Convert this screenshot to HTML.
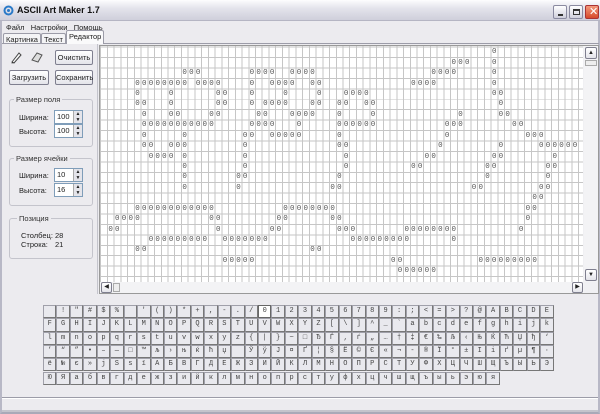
<!DOCTYPE html>
<html><head><meta charset="utf-8"><style>
*{margin:0;padding:0;box-sizing:border-box}
body{width:600px;height:414px;overflow:hidden;background:#ecebef;font-family:"Liberation Sans",sans-serif;font-size:7.5px;color:#222;position:relative}
.a{position:absolute}
#title{left:0;top:0;width:600px;height:21px;background:linear-gradient(#fdfdfe,#e4e4ec 40%,#cfcfdb);border-bottom:1px solid #b5b5c3}
#title span{position:absolute;left:17px;top:5px;font-weight:bold;font-size:9px;color:#111}
.wb{top:5px;width:14px;height:14px;border:1px solid #8a8aa0;border-radius:2px;background:linear-gradient(#fff,#cfcfdb)}
#frame{left:0;top:21px;width:600px;height:393px;border-left:2px solid #b8b8c6;border-right:2px solid #b8b8c6;border-bottom:2px solid #a9a9b8}
.tab{top:33px;height:11px;border:1px solid #9c9ca8;border-bottom:none;background:#f4f4f6;font-size:7.5px;padding:1px 2px;border-radius:2px 2px 0 0}
.btn{height:15px;border:1px solid #7f7f8f;border-radius:2px;background:linear-gradient(#fff,#e4e4ea);font-size:7.5px;text-align:center;line-height:13px}
.grp{border:1px solid #c4c4cc;border-radius:3px}
.lg{background:#ecebef;padding:0 2px;font-size:7.5px;color:#333}
.sp{width:29px;height:14px;background:#fff;border:1px solid #7f9db9;font-size:7.5px;padding-left:2px;line-height:12px}
.sp b{position:absolute;right:0;top:0;width:9px;height:12px;background:#e4e4ea;border-left:1px solid #aaa;font-weight:normal;font-size:5px;line-height:6px;text-align:center}
#grid{left:100px;top:46px;width:483px;height:236px;overflow:hidden;background-color:#fff;
background-image:repeating-linear-gradient(90deg,transparent 0,transparent 0.2px,#c6c6c6 0.2px,#c6c6c6 1.2px,transparent 1.2px,transparent 6.73px),
repeating-linear-gradient(180deg,transparent 0,transparent 0.6px,#c6c6c6 0.6px,#c6c6c6 1.6px,transparent 1.6px,transparent 10.43px)}
#grid i{position:absolute;font-style:normal;font-family:"Liberation Mono",monospace;font-size:7.5px;color:#555;line-height:10px;letter-spacing:2.23px;left:calc(var(--c)*6.73px + 1.6px);top:calc(var(--r)*10.43px + 1.3px);white-space:pre}
.kb{display:flex;position:absolute;left:43px}
.kb span{width:13.45px;height:13.3px;border:1px solid #a0a0aa;border-right-color:#777;border-bottom-color:#777;background:#e9e9ee;font-family:"Liberation Mono","DejaVu Sans Mono",monospace;font-size:7px;text-align:center;line-height:11px;color:#444;flex:none}
.kb span.sel{background:#fff;border:1px solid #666}
</style></head><body>
<div class="a" id="title"><svg class="a" style="left:3px;top:5px" width="11" height="11"><circle cx="5.5" cy="5.5" r="4" fill="none" stroke="#2a7ac8" stroke-width="2"/><circle cx="5.5" cy="5.5" r="1.5" fill="#2a7ac8"/></svg><span>ASCII Art Maker 1.7</span>
<div class="a wb" style="left:553px"><div class="a" style="left:4px;top:8px;width:5px;height:2px;background:#333"></div></div>
<div class="a wb" style="left:569px"><div class="a" style="left:3px;top:3px;width:7px;height:6px;border:1px solid #333;border-top-width:2px"></div></div>
<div class="a wb" style="left:585px;background:linear-gradient(#f39a7c,#d6492a);border-color:#a33"><span style="left:3px;top:-1px;color:#fff;font-size:11px;font-weight:normal">✕</span></div>
</div>
<div class="a" id="frame"></div>
<div class="a" style="left:6px;top:23px">Файл&nbsp;&nbsp; Настройки&nbsp;&nbsp; Помощь</div>
<div class="a tab" style="left:3px">Картинка</div>
<div class="a tab" style="left:41px">Текст</div>
<div class="a tab" style="left:66px;top:30px;height:14px;background:#fafafb;z-index:2">Редактор</div>
<div class="a" style="left:2px;top:43px;width:597px;height:1px;background:#9c9ca8"></div>
<div class="a" style="left:97px;top:44px;width:1px;height:250px;background:#c4c4cc"></div>

<svg class="a" style="left:9px;top:50px" width="14" height="14"><path d="M3 12 L10 3 L12 5 L5 13 Z" fill="#f8f8f8" stroke="#444" stroke-width="1"/><path d="M3 12 L2.5 13.5 L5 13" fill="#333"/></svg>
<svg class="a" style="left:30px;top:51px" width="14" height="12"><path d="M2 9 L7 2 L12 4 L8 11 Z" fill="#ddd" stroke="#555"/></svg>
<div class="a btn" style="left:55px;top:50px;width:38px">Очистить</div>
<div class="a btn" style="left:9px;top:70px;width:40px">Загрузить</div>
<div class="a btn" style="left:55px;top:70px;width:38px">Сохранить</div>

<div class="a grp" style="left:9px;top:99px;width:84px;height:48px"></div>
<div class="a lg" style="left:14px;top:95px">Размер поля</div>
<div class="a" style="left:19px;top:113px">Ширина:</div>
<div class="a sp" style="left:54px;top:110px">100<b>▲<br>▼</b></div>
<div class="a" style="left:19px;top:127px">Высота:</div>
<div class="a sp" style="left:54px;top:124px">100<b>▲<br>▼</b></div>

<div class="a grp" style="left:9px;top:158px;width:84px;height:48px"></div>
<div class="a lg" style="left:14px;top:154px">Размер ячейки</div>
<div class="a" style="left:19px;top:171px">Ширина:</div>
<div class="a sp" style="left:54px;top:168px">10<b>▲<br>▼</b></div>
<div class="a" style="left:19px;top:186px">Высота:</div>
<div class="a sp" style="left:54px;top:183px">16<b>▲<br>▼</b></div>

<div class="a grp" style="left:9px;top:218px;width:84px;height:41px"></div>
<div class="a lg" style="left:17px;top:214px">Позиция</div>
<div class="a" style="left:21px;top:231px">Столбец:</div><div class="a" style="left:55px;top:231px">28</div>
<div class="a" style="left:21px;top:240px">Строка:</div><div class="a" style="left:55px;top:240px">21</div>

<div class="a" style="left:99px;top:45px;width:500px;height:249px;border:1px solid #999;background:#f0f0f3"></div>
<div class="a" id="grid">
<i style="--r:0;--c:58">0</i>
<i style="--r:1;--c:52">000</i><i style="--r:1;--c:58">0</i>
<i style="--r:2;--c:12">000</i><i style="--r:2;--c:22">0000</i><i style="--r:2;--c:28">0000</i><i style="--r:2;--c:49">0000</i><i style="--r:2;--c:58">0</i>
<i style="--r:3;--c:5">00000000</i><i style="--r:3;--c:14">0000</i><i style="--r:3;--c:22">0</i><i style="--r:3;--c:25">0000</i><i style="--r:3;--c:31">00</i><i style="--r:3;--c:46">0000</i><i style="--r:3;--c:58">0</i>
<i style="--r:4;--c:5">0</i><i style="--r:4;--c:10">0</i><i style="--r:4;--c:17">00</i><i style="--r:4;--c:22">0</i><i style="--r:4;--c:27">0</i><i style="--r:4;--c:32">0</i><i style="--r:4;--c:36">0000</i><i style="--r:4;--c:58">00</i>
<i style="--r:5;--c:5">00</i><i style="--r:5;--c:10">0</i><i style="--r:5;--c:17">00</i><i style="--r:5;--c:22">0</i><i style="--r:5;--c:24">0000</i><i style="--r:5;--c:31">00</i><i style="--r:5;--c:35">00</i><i style="--r:5;--c:39">00</i><i style="--r:5;--c:59">0</i>
<i style="--r:6;--c:6">0</i><i style="--r:6;--c:10">00</i><i style="--r:6;--c:16">00</i><i style="--r:6;--c:23">00</i><i style="--r:6;--c:28">0000</i><i style="--r:6;--c:35">0</i><i style="--r:6;--c:40">0</i><i style="--r:6;--c:53">0</i><i style="--r:6;--c:59">00</i>
<i style="--r:7;--c:6">00000000000</i><i style="--r:7;--c:22">0000</i><i style="--r:7;--c:29">0</i><i style="--r:7;--c:35">000000</i><i style="--r:7;--c:51">000</i><i style="--r:7;--c:61">00</i>
<i style="--r:8;--c:6">0</i><i style="--r:8;--c:12">0</i><i style="--r:8;--c:21">00</i><i style="--r:8;--c:25">00000</i><i style="--r:8;--c:35">0</i><i style="--r:8;--c:51">0</i><i style="--r:8;--c:63">000</i>
<i style="--r:9;--c:6">00</i><i style="--r:9;--c:10">000</i><i style="--r:9;--c:21">0</i><i style="--r:9;--c:35">00</i><i style="--r:9;--c:50">0</i><i style="--r:9;--c:59">0</i><i style="--r:9;--c:65">000000</i>
<i style="--r:10;--c:7">0000</i><i style="--r:10;--c:12">0</i><i style="--r:10;--c:21">0</i><i style="--r:10;--c:36">0</i><i style="--r:10;--c:48">00</i><i style="--r:10;--c:58">00</i><i style="--r:10;--c:67">0</i>
<i style="--r:11;--c:12">0</i><i style="--r:11;--c:21">0</i><i style="--r:11;--c:36">0</i><i style="--r:11;--c:46">00</i><i style="--r:11;--c:57">00</i><i style="--r:11;--c:66">00</i>
<i style="--r:12;--c:12">0</i><i style="--r:12;--c:20">00</i><i style="--r:12;--c:35">0</i><i style="--r:12;--c:57">0</i><i style="--r:12;--c:66">0</i>
<i style="--r:13;--c:12">0</i><i style="--r:13;--c:20">0</i><i style="--r:13;--c:34">00</i><i style="--r:13;--c:55">00</i><i style="--r:13;--c:65">00</i>
<i style="--r:14;--c:64">00</i>
<i style="--r:15;--c:5">000000000000</i><i style="--r:15;--c:27">00000000</i><i style="--r:15;--c:63">00</i>
<i style="--r:16;--c:2">0000</i><i style="--r:16;--c:16">00</i><i style="--r:16;--c:26">00</i><i style="--r:16;--c:34">00</i><i style="--r:16;--c:63">0</i>
<i style="--r:17;--c:1">00</i><i style="--r:17;--c:17">0</i><i style="--r:17;--c:25">00</i><i style="--r:17;--c:35">000</i><i style="--r:17;--c:45">00000000</i><i style="--r:17;--c:62">0</i>
<i style="--r:18;--c:7">000000000</i><i style="--r:18;--c:18">0000000</i><i style="--r:18;--c:37">000000000</i><i style="--r:18;--c:52">0</i>
<i style="--r:19;--c:5">00</i><i style="--r:19;--c:31">00</i>
<i style="--r:20;--c:18">00000</i><i style="--r:20;--c:43">00</i><i style="--r:20;--c:56">000000000</i>
<i style="--r:21;--c:44">000000</i>
</div>
<div class="a" style="left:584px;top:46px;width:14px;height:236px;background:#f3f3f5"></div>
<div class="a btn" style="left:585px;top:47px;width:12px;height:12px;font-size:6px;line-height:10px">▲</div>
<div class="a" style="left:585px;top:60px;width:12px;height:6px;border:1px solid #aaa;background:#eee"></div>
<div class="a btn" style="left:585px;top:269px;width:12px;height:12px;font-size:6px;line-height:10px">▼</div>
<div class="a" style="left:100px;top:282px;width:484px;height:11px;background:#f3f3f5"></div>
<div class="a btn" style="left:101px;top:282px;width:11px;height:11px;font-size:6px;line-height:9px">◀</div>
<div class="a" style="left:113px;top:283px;width:7px;height:9px;border:1px solid #aaa;background:#eee"></div>
<div class="a btn" style="left:572px;top:282px;width:11px;height:11px;font-size:6px;line-height:9px">▶</div>

<div class="kb" style="top:305px"><span></span><span>!</span><span>"</span><span>#</span><span>$</span><span>%</span><span></span><span>'</span><span>(</span><span>)</span><span>*</span><span>+</span><span>,</span><span>-</span><span>.</span><span>/</span><span class="sel">0</span><span>1</span><span>2</span><span>3</span><span>4</span><span>5</span><span>6</span><span>7</span><span>8</span><span>9</span><span>:</span><span>;</span><span>&lt;</span><span>=</span><span>&gt;</span><span>?</span><span>@</span><span>A</span><span>B</span><span>C</span><span>D</span><span>E</span></div>
<div class="kb" style="top:318.3px"><span>F</span><span>G</span><span>H</span><span>I</span><span>J</span><span>K</span><span>L</span><span>M</span><span>N</span><span>O</span><span>P</span><span>Q</span><span>R</span><span>S</span><span>T</span><span>U</span><span>V</span><span>W</span><span>X</span><span>Y</span><span>Z</span><span>[</span><span>\</span><span>]</span><span>^</span><span>_</span><span>`</span><span>a</span><span>b</span><span>c</span><span>d</span><span>e</span><span>f</span><span>g</span><span>h</span><span>i</span><span>j</span><span>k</span></div>
<div class="kb" style="top:331.6px"><span>l</span><span>m</span><span>n</span><span>o</span><span>p</span><span>q</span><span>r</span><span>s</span><span>t</span><span>u</span><span>v</span><span>w</span><span>x</span><span>y</span><span>z</span><span>{</span><span>|</span><span>}</span><span>~</span><span>□</span><span>Ђ</span><span>Ѓ</span><span>‚</span><span>ѓ</span><span>„</span><span>…</span><span>†</span><span>‡</span><span>€</span><span>‰</span><span>Љ</span><span>‹</span><span>Њ</span><span>Ќ</span><span>Ћ</span><span>Џ</span><span>ђ</span><span>‘</span></div>
<div class="kb" style="top:344.9px"><span>’</span><span>“</span><span>”</span><span>•</span><span>–</span><span>—</span><span>□</span><span>™</span><span>љ</span><span>›</span><span>њ</span><span>ќ</span><span>ћ</span><span>џ</span><span></span><span>Ў</span><span>ў</span><span>Ј</span><span>¤</span><span>Ґ</span><span>¦</span><span>§</span><span>Ё</span><span>©</span><span>Є</span><span>«</span><span>¬</span><span>-</span><span>®</span><span>Ї</span><span>°</span><span>±</span><span>І</span><span>і</span><span>ґ</span><span>µ</span><span>¶</span><span>·</span></div>
<div class="kb" style="top:358.2px"><span>ё</span><span>№</span><span>є</span><span>»</span><span>ј</span><span>Ѕ</span><span>ѕ</span><span>ї</span><span>А</span><span>Б</span><span>В</span><span>Г</span><span>Д</span><span>Е</span><span>Ж</span><span>З</span><span>И</span><span>Й</span><span>К</span><span>Л</span><span>М</span><span>Н</span><span>О</span><span>П</span><span>Р</span><span>С</span><span>Т</span><span>У</span><span>Ф</span><span>Х</span><span>Ц</span><span>Ч</span><span>Ш</span><span>Щ</span><span>Ъ</span><span>Ы</span><span>Ь</span><span>Э</span></div>
<div class="kb" style="top:371.5px"><span>Ю</span><span>Я</span><span>а</span><span>б</span><span>в</span><span>г</span><span>д</span><span>е</span><span>ж</span><span>з</span><span>и</span><span>й</span><span>к</span><span>л</span><span>м</span><span>н</span><span>о</span><span>п</span><span>р</span><span>с</span><span>т</span><span>у</span><span>ф</span><span>х</span><span>ц</span><span>ч</span><span>ш</span><span>щ</span><span>ъ</span><span>ы</span><span>ь</span><span>э</span><span>ю</span><span>я</span></div>

<div class="a" style="left:2px;top:397px;width:596px;height:2px;border-top:1px solid #9c9ca8;border-bottom:1px solid #fff"></div>
<div class="a" style="left:2px;top:410px;width:596px;height:2px;background:#c4c4cc"></div>
</body></html>
